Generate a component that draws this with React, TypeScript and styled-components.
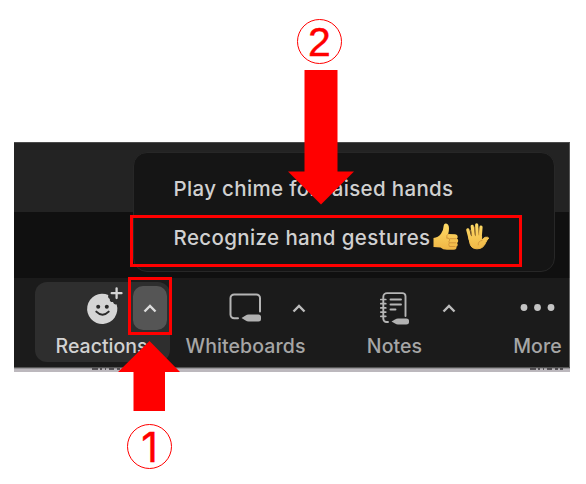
import React from 'react';
import styled, { createGlobalStyle } from 'styled-components';

const Global = createGlobalStyle`
  * { box-sizing: border-box; }
  body { margin: 0; background: #fff; font-family: Inter, "Liberation Sans", sans-serif; overflow: hidden; }
  svg { display: block; overflow: visible; }
`;

const Page = styled.main`
  position: relative;
  width: 586px;
  height: 484px;
  padding: 142px 16px 0 14px;
`;

const MeetingWindow = styled.section`
  position: relative;
  display: flex;
  flex-direction: column;
  width: 556px;
  height: 230px;
  background: #111;
`;

const Header = styled.div`
  height: 70px;
  background: #232323;
  border-top: 1px solid #4b4b4b;
  border-right: 1px solid #555;
`;

const Stage = styled.div`
  height: 66px;
  background: #101010;
  border-right: 1px solid #555;
`;

const Toolbar = styled.nav`
  display: grid;
  grid-template-columns: 135px 135px 135px 64px;
  column-gap: 9px;
  height: 89px;
  padding: 4px 0 5px 21px;
  background: #1b1b1b;
  border-right: 1px solid #666;
`;

const BottomEdge = styled.div`
  height: 5px;
  background: linear-gradient(#555 0 1px, #99979a 1px 2px, #bcb8bd 2px);
  display: flex;
  justify-content: space-between;
  padding: 1px 7px 0 77px;
`;

const Tool = styled.div<{ $active?: boolean; $shift?: number }>`
  display: grid;
  grid-template-rows: 50px 30px;
  height: 80px;
  border-radius: 12px;
  color: ${p => (p.$active ? '#d2d2d2' : '#a6a6a6')};
  background: ${p => (p.$active ? '#2e2e2e' : 'transparent')};
  margin-left: ${p => p.$shift ?? 0}px;
  margin-right: ${p => -(p.$shift ?? 0)}px;
`;

const IconRow = styled.div`
  display: grid;
  grid-template-columns: 1fr 40px 1fr;
  align-items: center;
`;

const IconSlot = styled.div`
  grid-column: 2;
  display: flex;
  justify-content: center;
`;

const Caret = styled.button<{ $active?: boolean }>`
  display: flex;
  align-items: center;
  justify-content: center;
  width: 34px;
  height: 44px;
  margin: 2px 0 0 ${p => (p.$active ? 10 : 17)}px;
  padding: 0;
  border: 0;
  border-radius: 10px;
  background: ${p => (p.$active ? '#555' : 'transparent')};
  color: ${p => (p.$active ? '#ddd' : '#bcbcbc')};
`;

const Label = styled.span<{ $spacing: number; $nudge?: number }>`
  justify-self: center;
  font-size: 19.5px;
  line-height: 28px;
  font-weight: 450;
  letter-spacing: ${p => p.$spacing}px;
  margin-left: ${p => p.$nudge ?? 0}px;
  white-space: nowrap;
`;

const Popup = styled.div`
  position: absolute;
  left: 119px;
  top: 10px;
  width: 422px;
  height: 120px;
  padding: 11px 0 0 39.5px;
  border: 1px solid #272727;
  border-radius: 14px;
  background: #151515;
`;

const MenuItem = styled.div<{ $spacing: number }>`
  display: flex;
  align-items: center;
  height: 49px;
  color: #d0d0d0;
  font-size: 20.5px;
  font-weight: 450;
  letter-spacing: ${p => p.$spacing}px;
  white-space: nowrap;
`;

const Gestures = styled.span`
  display: flex;
  gap: 7px;
  margin: -2px 0 0 2.5px;
`;

const Highlight = styled.div<{ $x: number; $y: number; $w: number; $h: number }>`
  position: absolute;
  left: ${p => p.$x}px;
  top: ${p => p.$y}px;
  width: ${p => p.$w}px;
  height: ${p => p.$h}px;
  border: 3px solid #f00;
`;

const ArrowMark = styled.svg<{ $x: number; $y: number }>`
  position: absolute;
  left: ${p => p.$x}px;
  top: ${p => p.$y}px;
  fill: #f00;
`;

const Step = styled.div<{ $x: number; $y: number; $face: string }>`
  position: absolute;
  left: ${p => p.$x}px;
  top: ${p => p.$y}px;
  display: flex;
  align-items: center;
  justify-content: center;
  width: 45px;
  height: 45px;
  border: 1.5px solid #f00;
  border-radius: 50%;
  color: #f00;
  font: 41px/45px ${p => p.$face}, sans-serif;
  -webkit-text-stroke: 0.4px #f00;
  padding-top: 1px;
`;

const Chevron = () => (
  <svg width="14" height="9" viewBox="0 0 14 9" fill="none" stroke="currentColor" strokeWidth="2.4">
    <path d="M1.5 7.5 7 2l5.5 5.5" />
  </svg>
);

const ReactionsIcon = () => (
  <svg width="30" height="34" viewBox="0 -1 30 34">
    <path fill="#d5d5d5" d="M20.3 4.1A15.1 15.1 0 1 0 28.6 13.3q-2.9.8-3.6-2.2-3.6.3-3.2-3.1-2.3-.8-1.5-3.9Z" />
    <path d="M28.6 -2.7v9.8M23.7 2.2h9.8" stroke="#d5d5d5" strokeWidth="2.3" strokeLinecap="round" />
    <circle cx="10.2" cy="15.8" r="2" fill="#292929" />
    <circle cx="18.8" cy="15.8" r="2" fill="#292929" />
    <path d="M8.3 20.6q6.2 6.2 12.4 0" stroke="#292929" strokeWidth="2" fill="none" strokeLinecap="round" />
  </svg>
);

const WhiteboardIcon = () => (
  <svg width="33" height="29" viewBox="0 0 33 29" fill="none">
    <path d="M9 25.3H5.2A3.7 3.7 0 0 1 1.5 21.6V5.1a3.7 3.7 0 0 1 3.7-3.7h22.1A3.7 3.7 0 0 1 31 5.1v13.3" stroke="#b5b5b5" strokeWidth="2" strokeLinecap="round" />
    <path d="m12.5 25 4.1-2.6q1.3-.9 3-.9h9.8q2.6 0 2.6 2.5v2q0 2.5-2.6 2.5h-9.8q-1.7 0-3-.9Z" fill="#b2b2b2" />
  </svg>
);

const NotesIcon = () => (
  <svg width="30" height="34" viewBox="0 -1.5 30 34" fill="none" stroke="#b5b5b5" strokeWidth="1.9" strokeLinecap="round">
    <path d="M8 30.5H6.5a3.2 3.2 0 0 1-3.2-3.2V5.4a3.8 3.8 0 0 1 3.8-3.8h15.2a3.2 3.2 0 0 1 3.2 3.2V24.5" />
    <path d="M.8 8h5M.8 12.2h5M.8 16.4h5M.8 20.6h5M.8 24.8h5" strokeWidth="1.7" />
    <path d="M10.5 8h10.5M10.5 13h10.5M10.5 18h5" />
    <path d="m11.5 30 3.5-2.1q1.5-.9 3-.9h8.3q2.7 0 2.7 2v2q0 2-2.7 2H18q-1.5 0-3-.9Z" fill="#b2b2b2" stroke="none" />
  </svg>
);

const DotsIcon = () => (
  <svg width="34" height="8" viewBox="0.5 -0.5 34 8" fill="#c4c4c4">
    <circle cx="3.5" cy="4" r="3.4" /><circle cx="17" cy="4" r="3.4" /><circle cx="30.5" cy="4" r="3.4" />
  </svg>
);

const ThumbIcon = () => (
  <svg width="26" height="27" viewBox="0 0 26 27">
    <defs>
      <linearGradient id="skin" x2="0" y2="1"><stop stopColor="#ffdc67" /><stop offset="1" stopColor="#efb645" /></linearGradient>
    </defs>
    <path fill="url(#skin)" d="M.5 15Q5.2 14.7 8 10.8q2.5-3.3 2.6-7.5Q10.8.3 13 .4q3 .2 3 5.2 0 2.9-.8 5.4l7 .2q2.5.3 2.5 2.5 0 1.3-.8 1.9 1.4.7 1.3 2.3-.1 1.5-1.2 2 .9.8.7 2-.2 1.4-1.4 1.8.5.8 0 1.7-.7 1.3-2.8 1.3H14q-4.2 0-6.5-2.2L.5 24Z" />
    <path d="M15.2 11q-2.3 1.3-1.4 4M17 15.7h6.2M16.8 19.8h6M17 23.5h5M14 15q2.5-.3 2.8 2.1-1.5 1-.5 2.8-1.2 1.2 0 3.4" stroke="#c98934" strokeWidth=".75" fill="none" strokeLinecap="round" />
  </svg>
);

const HandIcon = () => (
  <svg width="25" height="27" viewBox="0 0 25 27" fill="none" stroke="url(#skin2)" strokeLinecap="round" strokeLinejoin="round">
    <defs>
      <linearGradient id="skin2" gradientUnits="userSpaceOnUse" x1="0" y1="0" x2="0" y2="27"><stop stopColor="#ffdc67" /><stop offset="1" stopColor="#efb645" /></linearGradient>
    </defs>
    <path d="M4.2 16 1.8 6.8M7.6 14 6.2 3.4M11.2 14 10.7 1.9M14.2 14l.8-9.8" strokeWidth="3.2" />
    <path d="M2.9 13.2h12.7v4.2q1.9-2.6 3.8-3.1 2.7-.5 3.4.9-1.8 1.3-3.2 4.6-2.2 6-8.6 6-6 0-7.1-5.5Z" fill="url(#skin2)" strokeWidth="1" />
    <path d="M5.6 12 4.3 7M9.1 12 8.4 4M12.8 12l.1-6.5M16 17.5q-4 .3-3.8 4.4" stroke="#c98934" strokeWidth=".65" />
  </svg>
);

const HiddenCaption = () => (
  <svg width="34" height="2" viewBox="0 0 34 2" stroke="#38363a" strokeWidth="1.4">
    <path d="M1 1h6M9 1h2M14 1h1M18 1h5M26 1h3M31 1h3" />
  </svg>
);

export default function App() {
  return (
    <>
      <Global />
      <Page>
        <MeetingWindow>
          <Header />
          <Stage />
          <Toolbar>
            <Tool $active>
              <IconRow><IconSlot><ReactionsIcon /></IconSlot><Caret $active aria-label="Reaction options"><Chevron /></Caret></IconRow>
              <Label $spacing={0} $nudge={-2}>Reactions</Label>
            </Tool>
            <Tool $shift={2}>
              <IconRow><IconSlot><WhiteboardIcon /></IconSlot><Caret aria-label="Whiteboard options"><Chevron /></Caret></IconRow>
              <Label $spacing={0.1} $nudge={-6}>Whiteboards</Label>
            </Tool>
            <Tool $shift={8}>
              <IconRow><IconSlot><NotesIcon /></IconSlot><Caret aria-label="Note options"><Chevron /></Caret></IconRow>
              <Label $spacing={0.1} $nudge={-8}>Notes</Label>
            </Tool>
            <Tool $shift={38.5}>
              <IconRow><IconSlot><DotsIcon /></IconSlot></IconRow>
              <Label $spacing={0.1}>More</Label>
            </Tool>
          </Toolbar>
          <BottomEdge><HiddenCaption /><HiddenCaption /></BottomEdge>
          <Popup>
            <MenuItem $spacing={0.34}>Play chime for raised hands</MenuItem>
            <MenuItem $spacing={0.38}>Recognize hand gestures<Gestures><ThumbIcon /><HandIcon /></Gestures></MenuItem>
          </Popup>
        </MeetingWindow>
        <Highlight $x={130} $y={215} $w={392} $h={52} />
        <Highlight $x={128} $y={277} $w={44} $h={58} />
        <ArrowMark $x={288} $y={70} width="66" height="135"><path d="M16.5 0h33v101.5H66L33 134.5 0 101.5h16.5Z" /></ArrowMark>
        <ArrowMark $x={118} $y={341} width="62" height="70"><path d="M31.5 0 62 31H47v39H15.5V31H0Z" /></ArrowMark>
        <Step $x={297} $y={19} $face={'"Liberation Sans"'}>2</Step>
        <Step $x={127} $y={424} $face="Inter">1</Step>
      </Page>
    </>
  );
}
